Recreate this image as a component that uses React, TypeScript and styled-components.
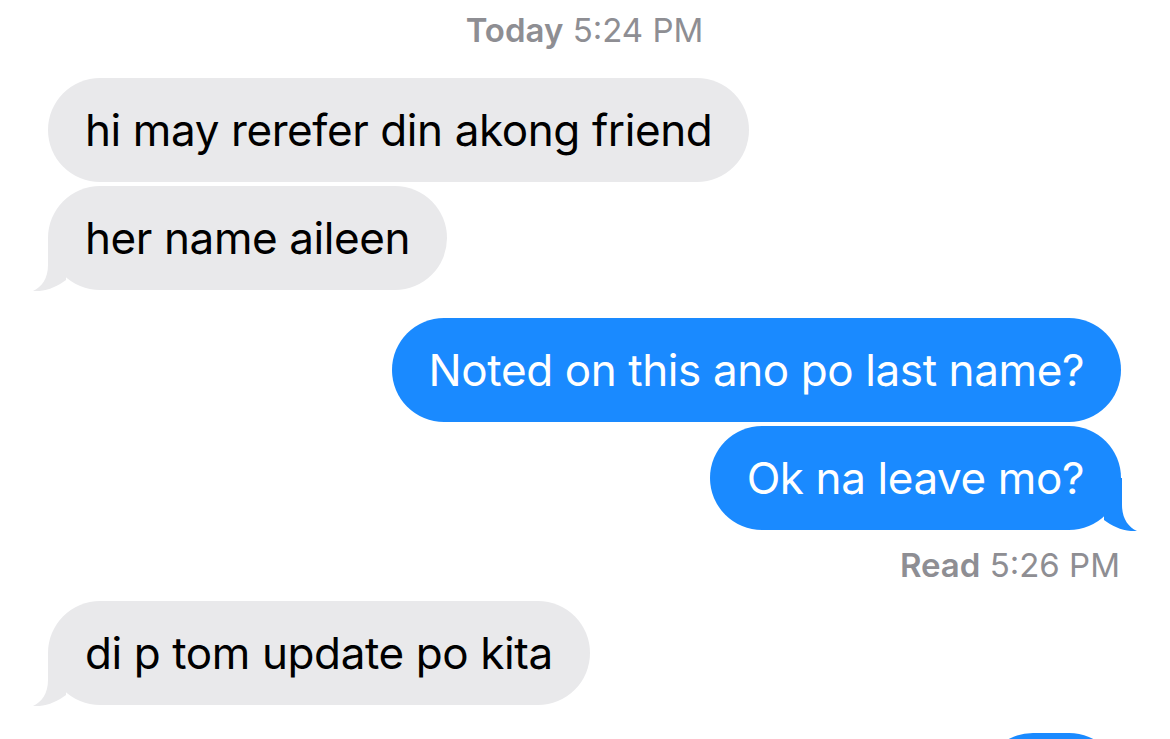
import React from "react";
import styled, { createGlobalStyle } from "styled-components";

type Message = {
    id: number;
    text: string;
    me: boolean;
    tail?: boolean;
    gap?: number;
    width?: number;
};

const before: Message[] = [
    { id: 1, text: "hi may rerefer din akong friend", me: false },
    { id: 2, text: "her name aileen", me: false, tail: true, gap: 4 },
    { id: 3, text: "Noted on this ano po last name?", me: true, gap: 28 },
    { id: 4, text: "Ok na leave mo?", me: true, tail: true, gap: 4 },
];

// last bubble is cut off by the bottom of the screen, only its top shows
const after: Message[] = [
    { id: 5, text: "di p tom update po kita", me: false, tail: true },
    { id: 6, text: "", me: true, gap: 28, width: 140 },
];

function Tail({ me }: { me: boolean }) {
    return (
        <TailShape $me={me} viewBox="0 0 34 53" width="34" height="53">
            <path d="M15 0 L15 27 C15 40 9 49 0 53 C12 54 24 49 33 42 L33 0 Z" />
        </TailShape>
    );
}

function Bubble({ msg }: { msg: Message }) {
    return (
        <Row $me={msg.me} $gap={msg.gap ?? 0}>
            <BubbleBox $me={msg.me} $width={msg.width}>
                {msg.tail && <Tail me={msg.me} />}
                {msg.text && <BubbleText>{msg.text}</BubbleText>}
            </BubbleBox>
        </Row>
    );
}

export default function App() {
    return (
        <>
            <GlobalStyle />
            <Thread>
                <Stamp>
                    <b>Today</b> 5:24 PM
                </Stamp>
                {before.map((m) => (
                    <Bubble key={m.id} msg={m} />
                ))}
                <Receipt>
                    <b>Read</b> 5:26 PM
                </Receipt>
                {after.map((m) => (
                    <Bubble key={m.id} msg={m} />
                ))}
            </Thread>
        </>
    );
}

const GlobalStyle = createGlobalStyle`
    html, body {
        margin: 0;
        padding: 0;
        background: #ffffff;
        overflow: hidden;
    }
    body {
        font-family: Inter, "Noto Sans", sans-serif;
        -webkit-font-smoothing: antialiased;
    }
`;

const Thread = styled.div`
    width: 1170px;
    height: 739px;
    overflow: hidden;
    display: flex;
    flex-direction: column;
    padding: 10px 49px 0 48px;
    box-sizing: border-box;
`;

const Stamp = styled.div`
    height: 40px;
    line-height: 40px;
    margin-bottom: 28px;
    text-align: center;
    font-size: 33px;
    color: #8e8e93;
    b {
        font-weight: 600;
    }
`;

const Receipt = styled.div`
    height: 71px;
    line-height: 71px;
    text-align: right;
    padding-right: 1px;
    font-size: 33px;
    color: #8e8e93;
    b {
        font-weight: 600;
    }
`;

const Row = styled.div<{ $me: boolean; $gap: number }>`
    display: flex;
    justify-content: ${(p) => (p.$me ? "flex-end" : "flex-start")};
    margin-top: ${(p) => p.$gap}px;
    flex-shrink: 0;
`;

const BubbleBox = styled.div<{ $me: boolean; $width?: number }>`
    position: relative;
    height: 104px;
    padding: 0 37px;
    box-sizing: border-box;
    ${(p) => (p.$width ? `width: ${p.$width}px;` : "")}
    border-radius: 52px;
    color: ${(p) => (p.$me ? "#ffffff" : "#000000")};
    background: ${(p) => (p.$me ? "#1a8aff" : "#e9e9eb")};
`;

const BubbleText = styled.span`
    position: relative;
    display: block;
    line-height: 104px;
    font-size: 44px;
    letter-spacing: -0.4px;
    white-space: nowrap;
`;

const TailShape = styled.svg<{ $me: boolean }>`
    position: absolute;
    bottom: -1px;
    ${(p) => (p.$me ? "right: -16px; transform: scaleX(-1);" : "left: -15px;")}
    fill: ${(p) => (p.$me ? "#1a8aff" : "#e9e9eb")};
`;
